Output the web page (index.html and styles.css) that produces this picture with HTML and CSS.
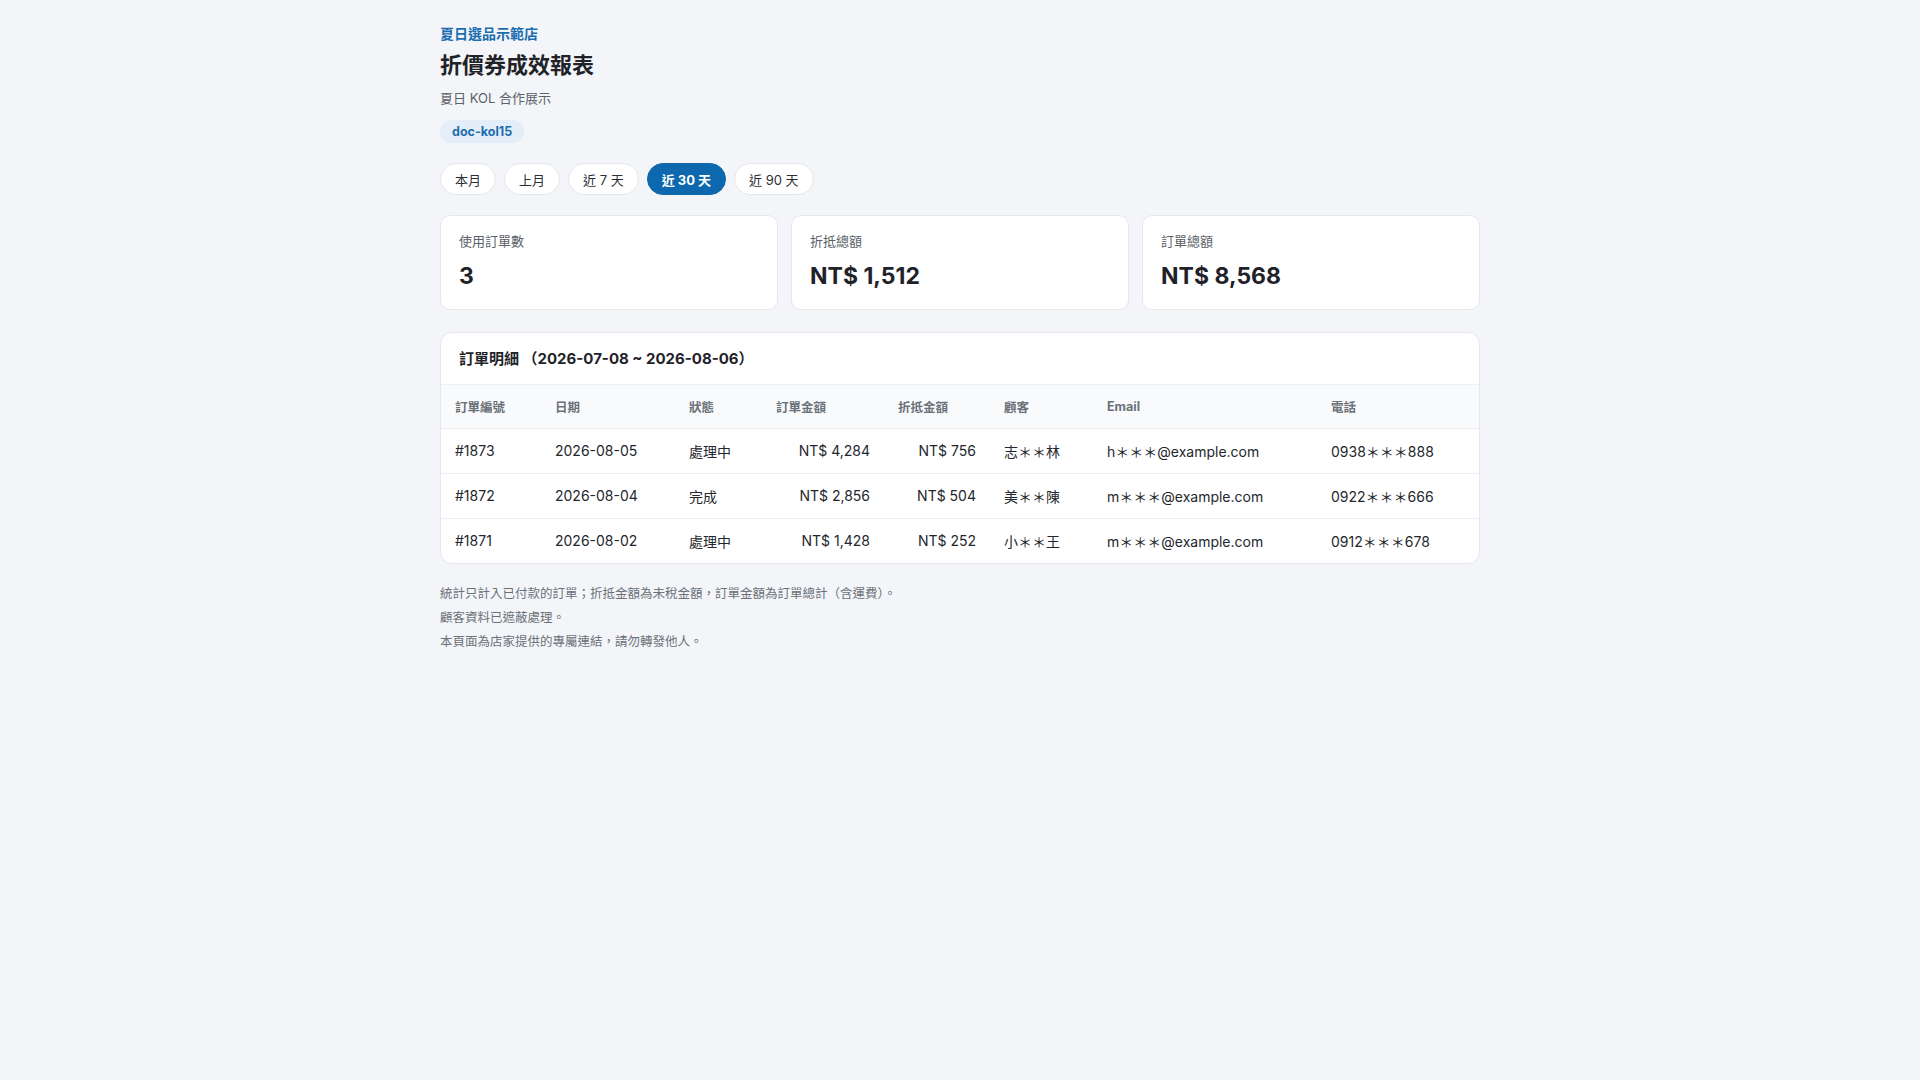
FILE: index.html
```html
<!DOCTYPE html>
<html lang="zh-Hant">
<head>
<meta charset="utf-8">
<title>折價券成效報表</title>
<link rel="stylesheet" href="styles.css">
</head>
<body>
<main class="page">
  <header class="head">
    <div class="store">夏日選品示範店</div>
    <h1 class="title">折價券成效報表</h1>
    <div class="subtitle">夏日 KOL 合作展示</div>
    <div class="badge-row"><span class="badge">doc-kol15</span></div>
  </header>

  <nav class="ranges">
    <button class="range">本月</button>
    <button class="range">上月</button>
    <button class="range">近 7 天</button>
    <button class="range active">近 30 天</button>
    <button class="range">近 90 天</button>
  </nav>

  <section class="stats">
    <div class="stat">
      <div class="stat-label">使用訂單數</div>
      <div class="stat-value">3</div>
    </div>
    <div class="stat">
      <div class="stat-label">折抵總額</div>
      <div class="stat-value">NT$ 1,512</div>
    </div>
    <div class="stat">
      <div class="stat-label">訂單總額</div>
      <div class="stat-value">NT$ 8,568</div>
    </div>
  </section>

  <section class="panel">
    <div class="panel-title">訂單明細 （2026-07-08 ~ 2026-08-06）</div>
    <table class="orders">
      <colgroup>
        <col class="c-id"><col class="c-date"><col class="c-status"><col class="c-total"><col class="c-disc"><col class="c-cust"><col class="c-email"><col class="c-phone">
      </colgroup>
      <thead>
        <tr>
          <th>訂單編號</th><th>日期</th><th>狀態</th><th>訂單金額</th><th>折抵金額</th><th>顧客</th><th>Email</th><th>電話</th>
        </tr>
      </thead>
      <tbody>
        <tr>
          <td>#1873</td><td>2026-08-05</td><td>處理中</td><td class="num">NT$ 4,284</td><td class="num">NT$ 756</td><td>志＊＊林</td><td>h＊＊＊@example.com</td><td>0938＊＊＊888</td>
        </tr>
        <tr>
          <td>#1872</td><td>2026-08-04</td><td>完成</td><td class="num">NT$ 2,856</td><td class="num">NT$ 504</td><td>美＊＊陳</td><td>m＊＊＊@example.com</td><td>0922＊＊＊666</td>
        </tr>
        <tr>
          <td>#1871</td><td>2026-08-02</td><td>處理中</td><td class="num">NT$ 1,428</td><td class="num">NT$ 252</td><td>小＊＊王</td><td>m＊＊＊@example.com</td><td>0912＊＊＊678</td>
        </tr>
      </tbody>
    </table>
  </section>

  <footer class="notes">
    <p>統計只計入已付款的訂單；折抵金額為未稅金額，訂單金額為訂單總計（含運費）。</p>
    <p>顧客資料已遮蔽處理。</p>
    <p>本頁面為店家提供的專屬連結，請勿轉發他人。</p>
  </footer>
</main>
</body>
</html>
```

FILE: styles.css
```css
* { box-sizing: border-box; }

html, body {
  margin: 0;
  padding: 0;
}

body {
  background: #f3f5f8;
  color: #1f2329;
  font-family: Inter, "Noto Sans CJK TC", "Noto Sans", sans-serif;
  font-size: 14px;
}

.page {
  width: 1040px;
  margin: 0 auto;
  padding-top: 24px;
}

.store {
  font-size: 14px;
  line-height: 20px;
  font-weight: 700;
  color: #1b6db0;
}

.title {
  margin: 6px 0 0;
  font-size: 22px;
  line-height: 30px;
  font-weight: 700;
  color: #1f2329;
}

.subtitle {
  margin-top: 8px;
  font-size: 13px;
  line-height: 20px;
  color: #5b6169;
}

.badge-row {
  margin-top: 12px;
  display: flex;
}

.badge {
  display: inline-flex;
  align-items: center;
  height: 23px;
  padding: 0 12px;
  border-radius: 999px;
  background: #e4eef8;
  color: #1b6db0;
  font-size: 12.5px;
  font-weight: 700;
}

.ranges {
  margin-top: 20px;
  display: flex;
  gap: 8px;
}

.range {
  height: 32px;
  padding: 0 14px;
  border: 1px solid #e3e6ea;
  border-radius: 999px;
  background: #ffffff;
  color: #2b2f35;
  font-family: inherit;
  font-size: 13px;
  cursor: pointer;
}

.range.active {
  background: #0d68ad;
  border-color: #0d68ad;
  color: #ffffff;
  font-weight: 700;
}

.stats {
  margin-top: 20px;
  display: grid;
  grid-template-columns: repeat(3, 1fr);
  gap: 13px;
}

.stat {
  height: 95px;
  padding: 15px 18px 18px;
  background: #ffffff;
  border: 1px solid #e6e8ec;
  border-radius: 10px;
}

.stat-label {
  font-size: 13px;
  line-height: 20px;
  color: #5b6169;
}

.stat-value {
  margin-top: 9px;
  font-size: 23px;
  line-height: 32px;
  font-weight: 700;
  color: #1f2329;
}

.panel {
  margin-top: 22px;
  background: #ffffff;
  border: 1px solid #e6e8ec;
  border-radius: 12px;
  overflow: hidden;
}

.panel-title {
  padding: 15px 18px 14px;
  font-size: 15px;
  line-height: 22px;
  font-weight: 700;
  color: #1f2329;
  border-bottom: 1px solid #eceef1;
}

.orders {
  width: 100%;
  border-collapse: collapse;
  table-layout: fixed;
}

.c-id { width: 100px; }
.c-date { width: 134px; }
.c-status { width: 87px; }
.c-total { width: 122px; }
.c-disc { width: 106px; }
.c-cust { width: 103px; }
.c-email { width: 224px; }
.c-phone { width: auto; }

.orders th {
  height: 43px;
  padding: 0 14px;
  text-align: left;
  font-size: 12.5px;
  font-weight: 700;
  color: #6b7179;
  background: #f8fafc;
  border-bottom: 1px solid #eceef1;
}

.orders td {
  height: 45px;
  padding: 0 14px;
  font-size: 14px;
  color: #23272d;
  border-bottom: 1px solid #eef0f3;
  white-space: nowrap;
}

.orders tbody tr:last-child td {
  border-bottom: none;
}

.orders td.num {
  text-align: right;
}

.notes {
  margin-top: 18px;
}

.notes p {
  margin: 0;
  font-size: 12.5px;
  line-height: 24px;
  color: #6b7179;
}
```
